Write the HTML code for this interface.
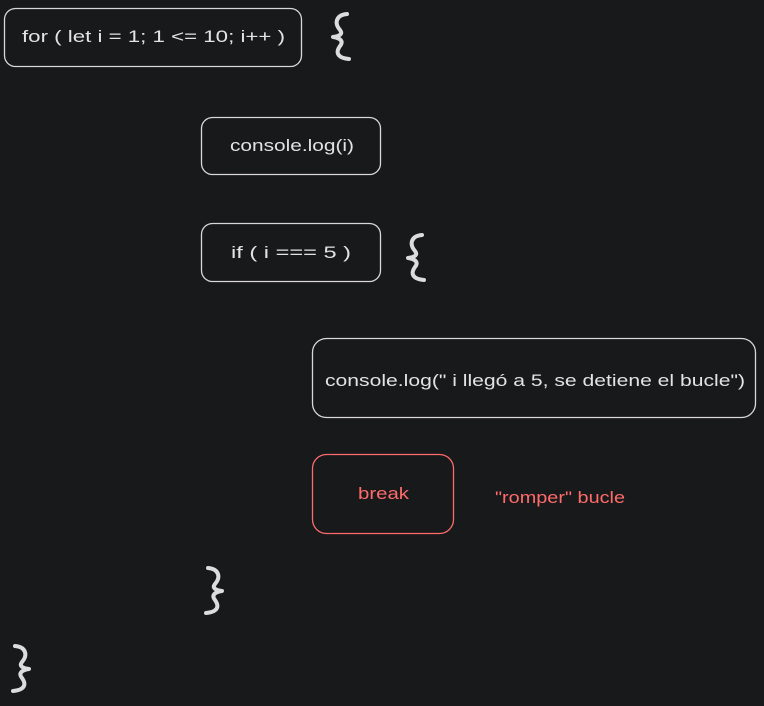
<!DOCTYPE html>
<html><head><meta charset="utf-8"><style>
html,body{margin:0;padding:0;background:#18191b;}
svg{display:block}
text{font-family:"Liberation Sans",sans-serif;font-size:17px;fill:#e3e3e3}
</style></head><body>
<svg width="764" height="706" viewBox="0 0 764 706" xmlns="http://www.w3.org/2000/svg">
<rect width="764" height="706" fill="#18191b"/>
<defs>
<path id="cb" d="M3,2 C14,3 16,11 10,18 C7,22 10,24 17,25 C10,26 6,29 10,34 C15,41 12,46 1,47" fill="none" stroke="#dcdcdc" stroke-width="4" stroke-linecap="round" stroke-linejoin="round"/>
</defs>
<g fill="none" stroke="#d8d8d8" stroke-width="1.3">
<rect x="4.5" y="8.5" width="297" height="58" rx="11"/>
<rect x="201.5" y="117.5" width="179" height="57" rx="11"/>
<rect x="201.5" y="223.5" width="179" height="58" rx="11"/>
<rect x="312.5" y="338.5" width="443" height="79" rx="14"/>
<rect x="312.5" y="454.5" width="141" height="79" rx="14" stroke="#ff6b6b"/>
</g>
<text x="22" y="42" textLength="263" lengthAdjust="spacingAndGlyphs">for ( let i = 1; 1 &lt;= 10; i++ )</text>
<text x="230" y="151" textLength="124" lengthAdjust="spacingAndGlyphs">console.log(i)</text>
<text x="231" y="258" textLength="120" lengthAdjust="spacingAndGlyphs">if ( i === 5 )</text>
<text x="325" y="386" textLength="420" lengthAdjust="spacingAndGlyphs">console.log(" i llegó a 5, se detiene el bucle")</text>
<text x="358" y="499" textLength="51" lengthAdjust="spacingAndGlyphs" style="fill:#ff6b6b">break</text>
<text x="495" y="503" textLength="130" lengthAdjust="spacingAndGlyphs" style="fill:#ff6b6b">"romper" bucle</text>
<use href="#cb" transform="translate(350,12) scale(-1,1)"/>
<use href="#cb" transform="translate(425,233) scale(-1,1)"/>
<use href="#cb" transform="translate(205,566)"/>
<use href="#cb" transform="translate(12,644)"/>
</svg>
</body></html>
